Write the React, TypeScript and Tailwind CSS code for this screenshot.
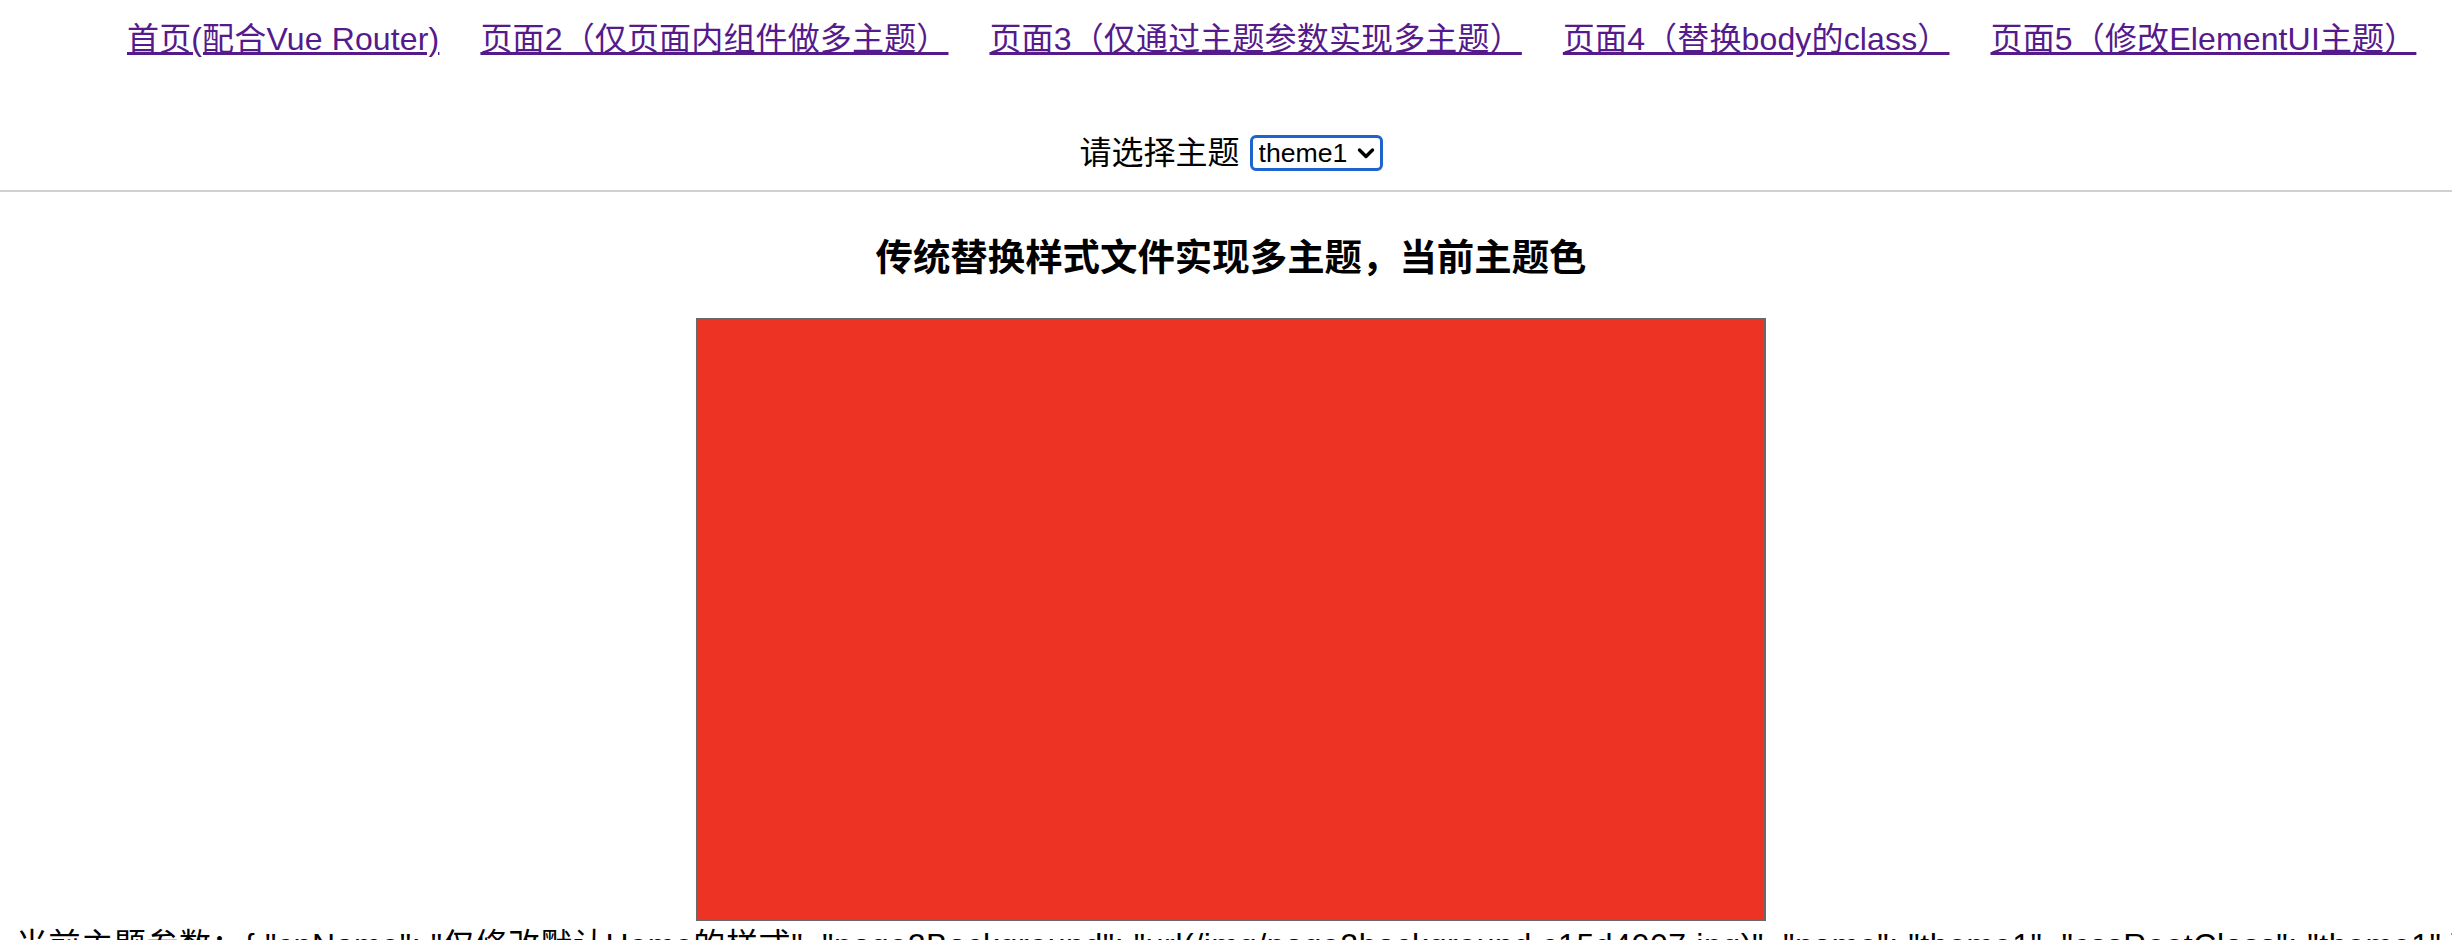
import { useState } from 'react';

const links = [
  '首页(配合Vue Router)',
  '页面2（仅页面内组件做多主题）',
  '页面3（仅通过主题参数实现多主题）',
  '页面4（替换body的class）',
  '页面5（修改ElementUI主题）',
];

const themes = ['theme1', 'theme2', 'theme3'];

const themeParams = {
  cnName: '仅修改默认Home的样式',
  page2Background: 'url(/img/page2background.c15d4007.jpg)',
  name: 'theme1',
  cssRootClass: 'theme1',
};

export default function App() {
  const [theme, setTheme] = useState('theme1');

  return (
    <div className="min-h-screen overflow-hidden bg-white text-black font-['Liberation_Sans','Noto_Sans_CJK_SC',sans-serif]">
      <nav className="flex gap-[41px] whitespace-nowrap pl-[127px] pt-[16px] text-[32px] leading-[46px] tracking-[0.15px]">
        {links.map((label) => (
          <a key={label} href="#" className="text-[#551a8b] underline">
            {label}
          </a>
        ))}
      </nav>

      <div className="mt-[68px] flex h-[46px] items-center justify-center pl-[26px] pr-[16px]">
        <span className="text-[32px] leading-[46px]">请选择主题</span>
        <div className="relative ml-[10px]">
          <select
            value={theme}
            onChange={(e) => setTheme(e.target.value)}
            className="block h-[36px] w-[133px] appearance-none rounded-[6px] border-[3px] border-[#1f63cf] bg-white pl-[6px] text-[26.67px] leading-none text-black outline-none"
          >
            {themes.map((t) => (
              <option key={t} value={t}>
                {t}
              </option>
            ))}
          </select>
          <svg
            className="pointer-events-none absolute right-[8px] top-1/2 -translate-y-1/2"
            width="18"
            height="14"
            viewBox="0 0 18 14"
            fill="none"
          >
            <path d="M2.5 4 L9 10.5 L15.5 4" stroke="#000" strokeWidth="3.4" strokeLinecap="round" strokeLinejoin="round" />
          </svg>
        </div>
      </div>

      <div className="mt-[14px] h-[2px] bg-[#d0d0d0]" />

      <main className="flex flex-col items-center pl-[26px] pr-[16px]">
        <h3 className="mt-[44px] text-[37.44px] font-bold leading-[44px]">
          传统替换样式文件实现多主题，当前主题色
        </h3>
        <div className="mt-[38px] h-[603px] w-[1070px] border-2 border-[#696969] bg-[#ec3324]" />
      </main>

      <p className="whitespace-nowrap px-[16px] text-[32px] leading-[48px] tracking-[0.6px]">
        当前主题参数：{JSON.stringify(themeParams, null, 1).replace(/\n/g, ' ')}
      </p>
    </div>
  );
}
